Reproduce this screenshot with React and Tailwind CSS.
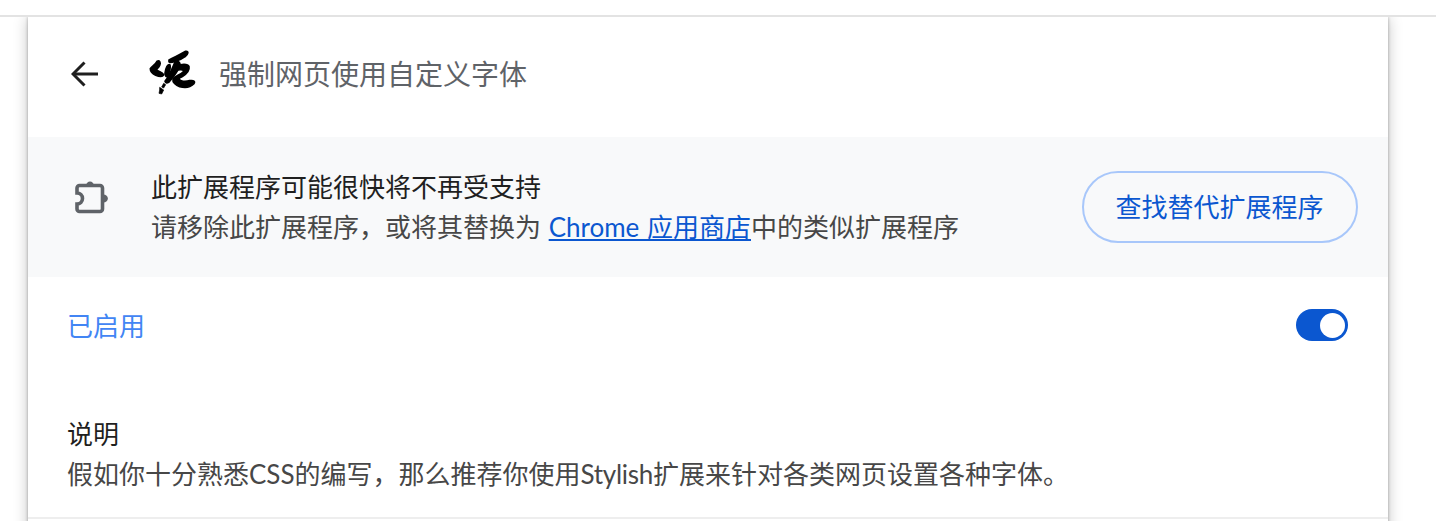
import React from 'react';

function BackArrow() {
    return (
        <svg width="28" height="28" viewBox="0 0 28 28" fill="none" stroke="#1f1f1f" strokeWidth="3">
            <path d="M27 14H3" />
            <path d="M13.5 2.5L2 14L13.5 25.5" />
        </svg>
    );
}

// brush-stroke extension logo
function BrushLogo() {
    return (
        <svg width="48" height="48" viewBox="12 12 144 144" fill="#000" stroke="#000" strokeWidth="5" strokeLinejoin="round">
            <path d="M16 68 C20 60 30 58 36 46 C44 42 48 50 44 58 C40 66 36 68 34 72 C42 76 52 78 56 86 C54 94 42 92 32 88 C24 84 16 78 16 68Z" />
            <path d="M60 82 C62 68 68 56 74 56 C78 60 74 78 68 90 C64 94 60 90 60 82Z" />
            <path d="M72 42 C86 36 104 26 122 16 C132 14 130 26 120 32 C112 38 104 42 96 44 C84 48 74 52 72 48Z" />
            <path d="M90 48 C104 44 108 52 102 64 C96 80 84 94 72 108 C66 112 62 112 60 106 C72 92 82 66 90 48Z" />
            <path d="M56 112 L62 116 L56 126 L50 123Z" strokeWidth="2" />
            <path d="M44 124 L56 132 L50 144 L42 142 L44 132Z" strokeWidth="2" />
            <path d="M96 60 C108 54 128 52 132 62 C134 72 124 84 112 92 C106 96 102 94 102 100 C106 106 120 108 134 104 C146 102 152 106 146 114 C136 124 120 126 104 122 C92 118 82 108 84 100 C88 90 104 88 114 78 C118 72 112 70 98 72 C92 72 90 64 96 60Z" />
        </svg>
    );
}

function ExtensionIcon() {
    return (
        <svg width="34" height="34" viewBox="0 0 34 34" fill="none">
            <path
                d="M4.5 5.5H25a2.5 2.5 0 0 1 2.5 2.5V29a2.5 2.5 0 0 1-2.5 2.5H4.5A2.5 2.5 0 0 1 2 29V24a5.5 5.5 0 0 0 0-11V8a2.5 2.5 0 0 1 2.5-2.5Z"
                stroke="#5f6368"
                strokeWidth="3.6"
            />
            <path d="M11 6C11 0 19 0 19 6Z" fill="#5f6368" />
            <path d="M28 14.5C34.5 14.5 34.5 22.5 28 22.5Z" fill="#5f6368" />
        </svg>
    );
}

export default function App() {
    return (
        <div className="h-[521px] overflow-hidden bg-white font-['Lato','Noto_Sans_CJK_SC',sans-serif] text-[26px] leading-[40px] text-[#474747]">
            <div className="relative z-10 h-[17px] border-b-2 border-[#e3e3e3] bg-white" />

            <main className="ml-[28px] h-[520px] w-[1360px] bg-white shadow-[0_0_3px_rgba(0,0,0,0.3),0_1px_14px_rgba(0,0,0,0.24)]">
                <header className="flex h-[120px] items-center pb-[6px] pl-[43px]">
                    <BackArrow />
                    <div className="ml-[50px]">
                        <BrushLogo />
                    </div>
                    <h1 className="ml-[22px] text-[28px] font-normal text-[#5f6368]">强制网页使用自定义字体</h1>
                </header>

                <section className="flex h-[140px] items-center bg-[#f8f9fa] pr-[30px] pl-[47px]">
                    <div className="mb-[20px]">
                        <ExtensionIcon />
                    </div>
                    <div className="ml-[42px] flex-1">
                        <div className="text-[#1f1f1f]">此扩展程序可能很快将不再受支持</div>
                        <div className="[word-spacing:1px]">
                            请移除此扩展程序，或将其替换为 <a className="text-[#0b57d0] underline">Chrome 应用商店</a>中的类似扩展程序
                        </div>
                    </div>
                    <button className="h-[72px] w-[276px] rounded-full border-2 border-[#a8c7fa] pr-[1px] text-[#0b57d0]">
                        查找替代扩展程序
                    </button>
                </section>

                <section className="flex h-[98px] items-center justify-between pr-[40px] pl-[39px]">
                    <span className="text-[#4285f4]">已启用</span>
                    <div className="mb-[2px] flex h-[32px] w-[52px] items-center justify-end rounded-full bg-[#0b57d0] pr-[3px]">
                        <div className="h-[25px] w-[25px] rounded-full bg-white" />
                    </div>
                </section>

                <section className="px-[39px] pt-[39px] pb-[23px]">
                    <div className="text-[#1f1f1f]">说明</div>
                    <div>
                        假如你十分熟悉CSS的编写，那么推荐你使用<span className="tracking-[-0.3px]">Stylish</span>扩展来针对各类网页设置各种字体。
                    </div>
                </section>

                <div className="h-[2px] bg-[#eeeeee]" />
            </main>
        </div>
    );
}
